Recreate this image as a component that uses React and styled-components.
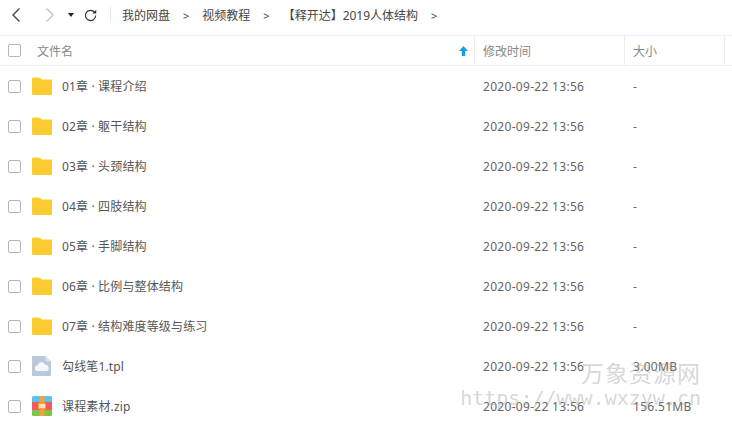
import React from 'react'
import styled, { createGlobalStyle } from 'styled-components'

const files = [
    { name: '01章 · 课程介绍', type: 'folder', size: '-' },
    { name: '02章 · 躯干结构', type: 'folder', size: '-' },
    { name: '03章 · 头颈结构', type: 'folder', size: '-' },
    { name: '04章 · 四肢结构', type: 'folder', size: '-' },
    { name: '05章 · 手脚结构', type: 'folder', size: '-' },
    { name: '06章 · 比例与整体结构', type: 'folder', size: '-' },
    { name: '07章 · 结构难度等级与练习', type: 'folder', size: '-' },
    { name: '勾线笔1.tpl', type: 'cloud', size: '3.00MB' },
    { name: '课程素材.zip', type: 'zip', size: '156.51MB' },
]

const crumbs = ['我的网盘', '视频教程', '【释开达】2019人体结构']

const FolderIcon = () => (
    <svg width="20" height="18" viewBox="0 0 20 18">
        <path d="M0 2a1.5 1.5 0 0 1 1.5-1.5h5.2c.6 0 1 .2 1.4.6L9.600 2.600h8.900A1.500 1.500 0 0 1 20 4v12.500a1.500 1.500 0 0 1-1.500 1.500h-17A1.500 1.500 0 0 1 0 16.500z" fill="#fbcb2f" />
    </svg>
)

const CloudIcon = () => (
    <svg width="20" height="20" viewBox="0 0 20 20">
        <path d="M1 0h12.500L19 5.500V19a1 1 0 0 1-1 1H1a1 1 0 0 1-1-1V1a1 1 0 0 1 1-1z" fill="#b9c9d9" />
        <path d="M13.500 0L19 5.500h-4.500a1 1 0 0 1-1-1z" fill="#d5e0ea" />
        <path d="M5.800 15a2.800 2.800 0 0 1-.3-5.600 4 4 0 0 1 7.600-.6 3.100 3.100 0 0 1 1 6.200z" fill="#fff" opacity="0.85" />
    </svg>
)

const ZipIcon = () => (
    <svg width="20" height="20" viewBox="0 0 20 20">
        <path d="M1.500 0h17A1.500 1.500 0 0 1 20 1.500V6H0V1.500A1.500 1.500 0 0 1 1.500 0z" fill="#5cc0f2" />
        <rect y="6" width="20" height="8" fill="#f4595b" />
        <path d="M0 14h20v4.500A1.500 1.500 0 0 1 18.500 20h-17A1.500 1.500 0 0 1 0 18.500z" fill="#7dc544" />
        <rect x="7.500" width="5" height="20" fill="#f3a23f" />
        <rect x="6.500" y="7.500" width="7" height="5" fill="#fbe3b8" stroke="#f3a23f" />
    </svg>
)

const icons = { folder: FolderIcon, cloud: CloudIcon, zip: ZipIcon }

const App = () => {
    return (
        <Page>
            <GlobalStyle />
            <Toolbar>
                <NavButton>
                    <svg width="12" height="16" viewBox="0 0 12 16"><path d="M9.500 1.500L3 8l6.500 6.500" fill="none" stroke="#444" strokeWidth="1.400" /></svg>
                </NavButton>
                <NavButton isDisabled>
                    <svg width="12" height="16" viewBox="0 0 12 16"><path d="M2.500 1.500L9 8l-6.500 6.500" fill="none" stroke="#c4c4c4" strokeWidth="1.400" /></svg>
                </NavButton>
                <DropCaret />
                <Refresh>
                    <svg width="13" height="13" viewBox="0 0 14 14">
                        <path d="M11.800 4.200A5.500 5.500 0 1 0 12.500 7" fill="none" stroke="#333" strokeWidth="1.300" />
                        <path d="M9 4.900h4.200V.800z" fill="#333" />
                    </svg>
                </Refresh>
                <Divider />
                <Crumbs>
                    {crumbs.map((c) => (
                        <Crumb key={c}>
                            <CrumbName>{c}</CrumbName>
                            <CrumbSep>&gt;</CrumbSep>
                        </Crumb>
                    ))}
                </Crumbs>
            </Toolbar>
            <HeaderRow>
                <CheckCell><Check /></CheckCell>
                <NameHead>
                    文件名
                    <svg width="9" height="10" viewBox="0 0 9 10"><path d="M4.500 0L9 5H6.200v5H2.800V5H0z" fill="#16a0e6" /></svg>
                </NameHead>
                <TimeHead>修改时间</TimeHead>
                <SizeHead>大小</SizeHead>
            </HeaderRow>
            {files.map((f) => {
                const Icon = icons[f.type]
                return (
                    <Row key={f.name}>
                        <CheckCell><Check /></CheckCell>
                        <IconCell><Icon /></IconCell>
                        <FileName>{f.name}</FileName>
                        <TimeCell>2020-09-22 13:56</TimeCell>
                        <SizeCell>{f.size}</SizeCell>
                    </Row>
                )
            })}
            <Watermark>
                <WatermarkTitle>万象资源网</WatermarkTitle>
                <WatermarkUrl>https://www.wxzyw.cn</WatermarkUrl>
            </Watermark>
        </Page>
    )
}

export default App

const GlobalStyle = createGlobalStyle`
    html, body {
        margin:0;
        padding:0;
        background:#fff;
    }
    body {
        font-family:"Noto Sans", "Noto Sans CJK SC", sans-serif;
    }
`

const Page = styled.div`
    position:relative;
    width:732px;
    height:432px;
    overflow:hidden;
    background:#fff;
    color:#666;
    font-size:12px;
`

const Toolbar = styled.div`
    display:flex;
    align-items:center;
    height:36px;
    padding:0 0 5px 10px;
    box-sizing:border-box;
    border-bottom:1px solid #f0f0f0;
`

const NavButton = styled.div`
    width:12px;
    height:16px;
    margin-right:${props => props.isDisabled ? "12px" : "22px"};
    display:flex;
`

const DropCaret = styled.div`
    width:0;
    height:0;
    border-left:3.5px solid transparent;
    border-right:3.5px solid transparent;
    border-top:4px solid #222;
    margin-right:10px;
`

const Refresh = styled.div`
    display:flex;
    width:13px;
    height:13px;
`

const Divider = styled.div`
    width:1px;
    height:16px;
    background:#e6e6e6;
    margin:0 11px 0 13px;
`

const Crumbs = styled.div`
    display:flex;
    align-items:center;
    color:#444;
`

const Crumb = styled.div`
    display:flex;
    align-items:center;
`

const CrumbName = styled.span`
    white-space:nowrap;
`

const CrumbSep = styled.span`
    margin:0 13px;
    font-size:11px;
`

const HeaderRow = styled.div`
    display:flex;
    align-items:center;
    height:30px;
    box-sizing:border-box;
    border-bottom:1px solid #f0f0f0;
    color:#888;
`

const CheckCell = styled.div`
    width:37px;
    padding-left:8px;
    box-sizing:border-box;
    flex:none;
    display:flex;
`

const Check = styled.div`
    width:13px;
    height:13px;
    box-sizing:border-box;
    border:1px solid #b5b5b5;
    border-radius:2px;
`

const NameHead = styled.div`
    flex:none;
    width:438px;
    height:100%;
    padding-right:6px;
    box-sizing:border-box;
    border-right:1px solid #eee;
    display:flex;
    align-items:center;
    justify-content:space-between;
`

const TimeHead = styled.div`
    flex:none;
    width:150px;
    height:100%;
    padding-left:8px;
    box-sizing:border-box;
    border-right:1px solid #eee;
    display:flex;
    align-items:center;
`

const SizeHead = styled.div`
    flex:none;
    width:100px;
    height:100%;
    padding-left:8px;
    box-sizing:border-box;
    border-right:1px solid #eee;
    display:flex;
    align-items:center;
`

const Row = styled.div`
    display:flex;
    align-items:center;
    height:40px;
`

const IconCell = styled.div`
    flex:none;
    width:20px;
    margin:0 0 0 -5px;
    display:flex;
    justify-content:center;
`

const FileName = styled.div`
    flex:none;
    width:421px;
    padding-left:10px;
    box-sizing:border-box;
    color:#555;
    letter-spacing:0.15px;
    white-space:nowrap;
`

const TimeCell = styled.div`
    flex:none;
    width:150px;
    padding-left:10px;
    box-sizing:border-box;
    color:#666;
    letter-spacing:0.3px;
`

const SizeCell = styled.div`
    flex:none;
    padding-left:10px;
    color:#666;
    letter-spacing:0.3px;
`

const Watermark = styled.div`
    position:absolute;
    right:31px;
    top:358px;
    display:flex;
    flex-direction:column;
    align-items:flex-end;
    color:rgba(165,165,165,0.45);
    pointer-events:none;
`

const WatermarkTitle = styled.div`
    font-size:23px;
    letter-spacing:1px;
    line-height:28px;
    font-family:"Noto Sans CJK SC", sans-serif;
`

const WatermarkUrl = styled.div`
    font-size:20px;
    line-height:24px;
    font-family:"DejaVu Sans Mono", monospace;
`
